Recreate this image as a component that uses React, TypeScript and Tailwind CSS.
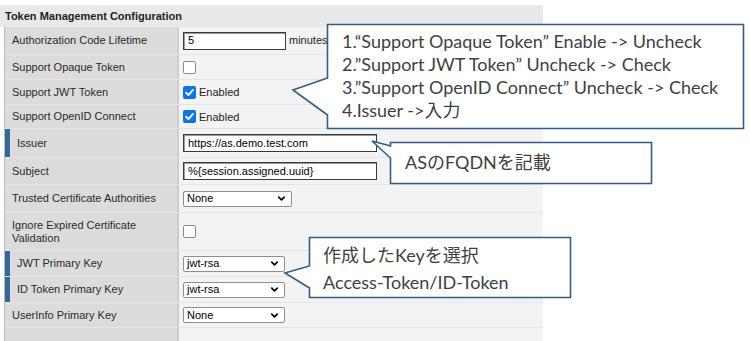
import { ChevronDown } from "lucide-react";

type Row = {
  label: string;
  h: string;
  mark?: boolean;
  value: React.ReactNode;
};

function Check({ on }: { on?: boolean }) {
  if (!on) {
    return <span className="block h-[13px] w-[13px] rounded-[2px] border border-[#8a8a8a] bg-white" />;
  }
  return (
    <span className="flex h-[13px] w-[13px] items-center justify-center rounded-[2px] bg-[#0b74e8]">
      <svg viewBox="0 0 12 12" className="h-[11px] w-[11px]">
        <path d="M2.3 6.3 L4.9 8.8 L9.8 3.2" fill="none" stroke="white" strokeWidth="2" strokeLinecap="round" strokeLinejoin="round" />
      </svg>
    </span>
  );
}

function TextBox({ w, text }: { w: string; text: string }) {
  return (
    <div className={`${w} flex h-[18px] items-center border border-[#3a3a3a] bg-white pl-[4px] shadow-[inset_1px_1px_0_#9a9a9a] text-[11px] text-black`}>
      {text}
    </div>
  );
}

function Select({ w, text }: { w: string; text: string }) {
  return (
    <div className={`${w} flex h-[16px] items-center justify-between rounded-[2px] border border-[#8f8f8f] bg-white pl-[3px] pr-[4px] text-[11px] text-black`}>
      <span>{text}</span>
      <ChevronDown className="h-[11px] w-[11px]" strokeWidth={3.5} />
    </div>
  );
}

function Enabled() {
  return (
    <div className="flex items-center gap-[3px] text-[11px] text-[#222]">
      <Check on />
      <span className="pt-[1px]">Enabled</span>
    </div>
  );
}

const ROWS: Row[] = [
  {
    label: "Authorization Code Lifetime",
    h: "h-[28px]",
    value: (
      <div className="flex items-center gap-[3px] text-[11px] text-[#222]">
        <TextBox w="w-[103px]" text="5" />
        <span>minutes</span>
      </div>
    ),
  },
  { label: "Support Opaque Token", h: "h-[25px]", value: <Check /> },
  { label: "Support JWT Token", h: "h-[25px]", value: <Enabled /> },
  { label: "Support OpenID Connect", h: "h-[24px]", value: <Enabled /> },
  { label: "Issuer", h: "h-[29px]", mark: true, value: <TextBox w="w-[194px]" text="https://as.demo.test.com" /> },
  { label: "Subject", h: "h-[27px]", value: <TextBox w="w-[194px]" text="%{session.assigned.uuid}" /> },
  { label: "Trusted Certificate Authorities", h: "h-[28px]", value: <Select w="w-[109px]" text="None" /> },
  {
    label: "Ignore Expired Certificate Validation",
    h: "h-[38px]",
    value: <Check />,
  },
  { label: "JWT Primary Key", h: "h-[26px]", mark: true, value: <Select w="w-[102px]" text="jwt-rsa" /> },
  { label: "ID Token Primary Key", h: "h-[26px]", mark: true, value: <Select w="w-[102px]" text="jwt-rsa" /> },
  { label: "UserInfo Primary Key", h: "h-[25px]", value: <Select w="w-[102px]" text="None" /> },
  { label: "", h: "h-[30px]", value: null },
];

export default function App() {
  return (
    <div className="relative h-[341px] w-[750px] overflow-hidden bg-white font-['Liberation_Sans',Arial,sans-serif]">
      <div className="pt-[5px]">
        <div className="h-[22px] w-[543px] bg-[#e9e9e9] pl-[5px] text-[11px] font-bold leading-[22px] text-[#1e1e1e]">
          Token Management Configuration
        </div>
        <div className="ml-[4px] w-[539px] border-l border-[#b9b9b9]">
          {ROWS.map((row, i) => (
            <div key={i} className={`flex ${row.h} border-b border-[#e4e4e4]`}>
              <div className="flex w-[174px] shrink-0 border-r-2 border-[#cdcdcd] bg-[#dcdcdc]">
                {row.mark && <div className="w-[5px] shrink-0 bg-[#37689c]" />}
                <div
                  className={`flex items-center text-[11px] leading-[13px] text-[#2a2a2a] ${row.mark ? "pl-[7px]" : "pl-[7px] pr-[6px]"}`}
                >
                  {row.label}
                </div>
              </div>
              <div className="flex flex-1 items-center bg-[#f3f3f3] pl-[4px]">{row.value}</div>
            </div>
          ))}
        </div>
      </div>

      <svg className="pointer-events-none absolute left-0 top-0" width="750" height="341">
        <g fill="white" stroke="#2d5d8c" strokeWidth="1.6" strokeLinejoin="miter">
          <path d="M327.5 24.5 H743.5 V128.5 H327.5 V115 L293 90 L327.5 78 Z" />
          <path d="M390.5 142.5 H651.5 V183.5 H390.5 V158 L372 141 L390.5 146 Z" />
          <path d="M309.5 237.5 H570.5 V297.5 H309.5 V288 L285 273 L309.5 266 Z" />
        </g>
      </svg>

      <div className="absolute left-[342px] top-[30px] font-['Lato','Noto_Sans_CJK_JP',sans-serif] text-[18px] leading-[23px] text-[#3f3f3f]">
        <div>1.“Support Opaque Token” Enable -&gt; Uncheck</div>
        <div>2.”Support JWT Token” Uncheck -&gt; Check</div>
        <div>3.”Support OpenID Connect” Uncheck -&gt; Check</div>
        <div>4.Issuer -&gt;入力</div>
      </div>

      <div className="absolute left-[405px] top-[151px] font-['Lato','Noto_Sans_CJK_JP',sans-serif] text-[18px] leading-[23px] text-[#3f3f3f]">
        ASのFQDNを記載
      </div>

      <div className="absolute left-[323px] top-[242px] font-['Lato','Noto_Sans_CJK_JP',sans-serif] text-[18px] leading-[27px] text-[#3f3f3f]">
        <div>作成したKeyを選択</div>
        <div>Access-Token/ID-Token</div>
      </div>
    </div>
  );
}
